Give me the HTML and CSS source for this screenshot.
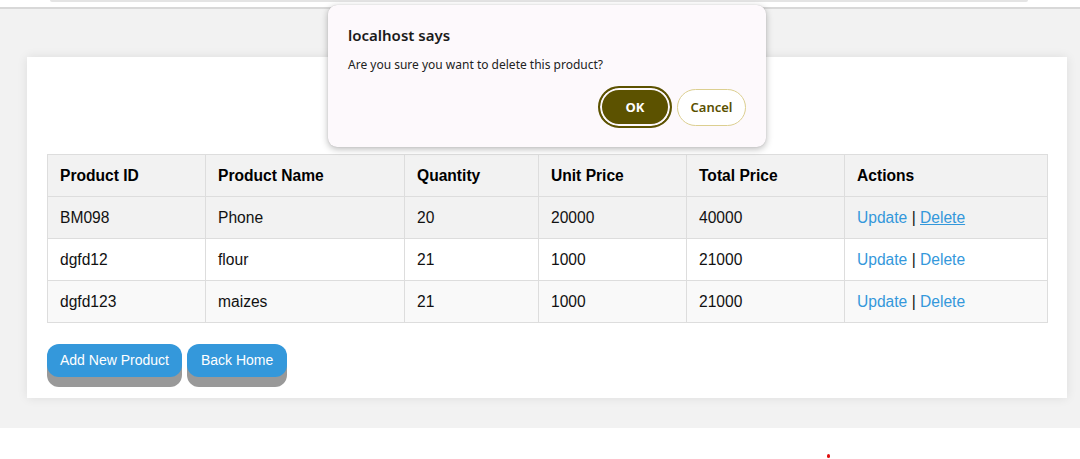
FILE: index.html
```html
<!DOCTYPE html>
<html lang="en">
<head>
<meta charset="utf-8">
<title>Products</title>
<link rel="stylesheet" href="styles.css">
</head>
<body>
<div class="topbar"><div class="topbar-inner"></div></div>
<main class="page">
  <section class="card">
    <h2 class="card-title">Product List</h2>
    <table class="products">
      <colgroup>
        <col class="c1"><col class="c2"><col class="c3"><col class="c4"><col class="c5"><col class="c6">
      </colgroup>
      <thead>
        <tr><th>Product ID</th><th>Product Name</th><th>Quantity</th><th>Unit Price</th><th>Total Price</th><th>Actions</th></tr>
      </thead>
      <tbody>
        <tr class="row-hover"><td>BM098</td><td>Phone</td><td>20</td><td>20000</td><td>40000</td><td><a class="link" href="#">Update</a> | <a class="link link-hover" href="#">Delete</a></td></tr>
        <tr class="row-white"><td>dgfd12</td><td>flour</td><td>21</td><td>1000</td><td>21000</td><td><a class="link" href="#">Update</a> | <a class="link" href="#">Delete</a></td></tr>
        <tr class="row-light"><td>dgfd123</td><td>maizes</td><td>21</td><td>1000</td><td>21000</td><td><a class="link" href="#">Update</a> | <a class="link" href="#">Delete</a></td></tr>
      </tbody>
    </table>
    <div class="actions">
      <a class="btn" href="#">Add New Product</a>
      <a class="btn" href="#">Back Home</a>
    </div>
  </section>
</main>
<div class="dialog">
  <div class="dialog-title">localhost says</div>
  <div class="dialog-msg">Are you sure you want to delete this product?</div>
  <div class="dialog-buttons">
    <button class="dbtn dbtn-ok">OK</button>
    <button class="dbtn dbtn-cancel">Cancel</button>
  </div>
</div>
<span class="dot"></span>
</body>
</html>
```
FILE: styles.css
```css
html, body {
  margin: 0;
  padding: 0;
  background: #ffffff;
  font-family: "Liberation Sans", Arial, sans-serif;
  color: #333333;
}
body {
  position: relative;
  height: 459px;
  overflow: hidden;
}
.topbar {
  height: 7px;
  background: #ffffff;
}
.topbar-inner {
  margin: 0 52px 0 50px;
  height: 2px;
  background: #e4e4e4;
  border-radius: 0 0 4px 4px;
}
.page {
  background: #f2f2f2;
  border-top: 2px solid #d8d8d8;
  padding: 48px 13px 30px 27px;
}
.card {
  background: #ffffff;
  padding: 20px 20px 21px;
  box-shadow: 0 0 10px rgba(0, 0, 0, 0.09);
}
.card-title {
  margin: 0;
  height: 77px;
  line-height: 77px;
  text-align: center;
  font-size: 24px;
  color: #333333;
}
.products {
  width: 1000px;
  border-collapse: collapse;
  table-layout: fixed;
  font-size: 15.6px;
}
.c1 { width: 158px; }
.c2 { width: 199px; }
.c3 { width: 134px; }
.c4 { width: 148px; }
.c5 { width: 158px; }
.c6 { width: 203px; }
.products th,
.products td {
  border: 1px solid #dddddd;
  padding: 12px 12px;
  line-height: 17px;
  text-align: left;
  color: #111111;
}
.products th {
  background: #f2f2f2;
  font-weight: bold;
  color: #000000;
}
.row-hover td { background: #f2f2f2; }
.row-white td { background: #ffffff; }
.row-light td { background: #f9f9f9; }
.link {
  color: #3498db;
  text-decoration: none;
}
.link-hover {
  text-decoration: underline;
}
.actions {
  display: flex;
  gap: 5px;
  margin-top: 21px;
}
.btn {
  display: block;
  background: #3498db;
  color: #ffffff;
  font-size: 14px;
  line-height: 17px;
  padding: 8px 13px;
  border-radius: 12px;
  text-decoration: none;
  box-shadow: 0 10px 0 #999999;
}
.btn + .btn {
  padding: 8px 14px;
}
.dialog {
  position: absolute;
  left: 328px;
  top: 5px;
  width: 438px;
  height: 142px;
  box-sizing: border-box;
  padding: 20px 20px 0;
  background: #fdf9fc;
  border-radius: 9px;
  box-shadow: 0 2px 7px rgba(0, 0, 0, 0.28), 0 0 1px rgba(0, 0, 0, 0.2);
  font-family: "Noto Sans", "Open Sans", sans-serif;
  color: #1b1b1b;
}
.dialog-title {
  font-size: 15px;
  font-weight: 600;
  line-height: 20px;
}
.dialog-msg {
  margin-top: 11px;
  font-size: 12px;
  line-height: 18px;
  color: #222222;
}
.dialog-buttons {
  display: flex;
  justify-content: flex-end;
  align-items: center;
  gap: 5px;
  margin-top: 12px;
}
.dbtn {
  box-sizing: border-box;
  border-radius: 22px;
  font-family: "Noto Sans", "Open Sans", sans-serif;
  font-size: 13px;
  font-weight: 600;
  padding: 0;
}
.dbtn-ok {
  width: 74px;
  height: 42px;
  background: #5c5200;
  border: 2px solid #5c5200;
  box-shadow: inset 0 0 0 2px #fdf9fc;
  color: #ffffff;
  font-weight: 700;
}
.dbtn-cancel {
  width: 69px;
  height: 37px;
  background: #ffffff;
  border: 1px solid #dccf90;
  color: #5a5000;
}
.dot {
  position: absolute;
  left: 827px;
  top: 454px;
  width: 3px;
  height: 4px;
  border-radius: 2px;
  background: #e01010;
}
```
